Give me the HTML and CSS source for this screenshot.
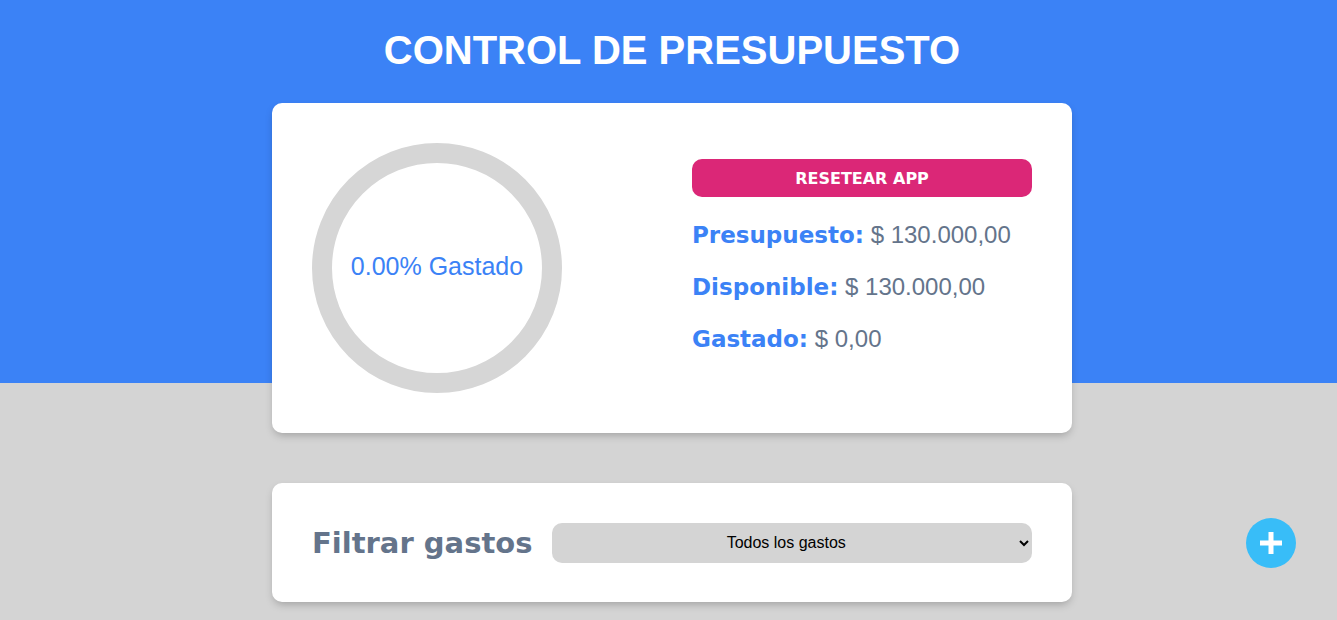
FILE: index.html
```html
<!DOCTYPE html>
<html lang="es">
<head>
<meta charset="utf-8">
<title>Control de presupuesto</title>
<link rel="stylesheet" href="styles.css">
</head>
<body>
<header class="header">
  <h1 class="title">CONTROL DE PRESUPUESTO</h1>
  <div class="card budget">
    <div class="progress">
      <span class="progress-text">0.00% Gastado</span>
    </div>
    <div class="summary">
      <button class="reset">RESETEAR APP</button>
      <p class="line"><span class="label">Presupuesto:</span> $ 130.000,00</p>
      <p class="line"><span class="label">Disponible:</span> $ 130.000,00</p>
      <p class="line"><span class="label">Gastado:</span> $ 0,00</p>
    </div>
  </div>
</header>
<main class="main">
  <div class="card filter">
    <label class="filter-label" for="filtro">Filtrar gastos</label>
    <select id="filtro" class="filter-select">
      <option>Todos los gastos</option>
    </select>
  </div>
</main>
<button class="add" aria-label="Nuevo gasto">
  <svg width="26" height="26" viewBox="0 0 26 26"><path d="M13 2v22M2 13h22" stroke="#fff" stroke-width="5" fill="none"/></svg>
</button>
</body>
</html>
```

FILE: styles.css
```css
* { box-sizing: border-box; }
body {
  margin: 0;
  padding-left: 7px;
  font-family: "Liberation Sans", Arial, sans-serif;
  background: linear-gradient(to bottom, #3b82f6 0, #3b82f6 383px, #d4d4d4 383px);
  min-height: 100vh;
}
.header { padding-top: 27px; }
.title {
  margin: 0 0 30px;
  text-align: center;
  color: #fff;
  font-size: 40px;
  line-height: 46px;
  font-weight: 700;
}
.card {
  width: 800px;
  margin: 0 auto;
  background: #fff;
  border-radius: 10px;
  box-shadow: 0 4px 8px -2px rgba(0,0,0,0.25);
  padding: 40px;
}
.budget {
  display: grid;
  grid-template-columns: 1fr 1fr;
  column-gap: 40px;
  align-items: center;
}
.progress {
  width: 250px;
  height: 250px;
  border-radius: 50%;
  border: 20px solid #d6d6d6;
  display: flex;
  align-items: center;
  justify-content: center;
  padding-bottom: 4px;
}
.progress-text {
  color: #3b82f6;
  font-size: 25px;
}
.summary { display: block; }
.reset {
  display: block;
  width: 100%;
  height: 38px;
  border: none;
  border-radius: 10px;
  background: #db2777;
  color: #fff;
  font-family: "DejaVu Sans", "Liberation Sans", sans-serif;
  font-weight: 700;
  font-size: 16px;
}
.line {
  margin: 24px 0;
  font-size: 24px;
  line-height: 27px;
  color: #64748b;
}
.label {
  font-family: "DejaVu Sans", "Liberation Sans", sans-serif;
  color: #3b82f6;
  font-weight: 700;
  font-size: 23px;
}
.main { padding-top: 50px; }
.filter {
  display: flex;
  align-items: center;
  gap: 20px;
  padding: 40px 40px 39px;
}
.filter-label {
  flex: 0 0 220px;
  font-family: "DejaVu Sans", "Liberation Sans", sans-serif;
  font-size: 29px;
  font-weight: 700;
  color: #64748b;
  white-space: nowrap;
}
.filter-select {
  flex: 1;
  height: 40px;
  border: none;
  border-radius: 10px;
  background: #d4d4d4;
  text-align: center;
  font-family: "Liberation Sans", Arial, sans-serif;
  font-size: 16px;
  color: #000;
  padding: 0 8px 2px;
}
.add {
  position: fixed;
  right: 41px;
  bottom: 52px;
  width: 50px;
  height: 50px;
  border-radius: 50%;
  border: none;
  background: #38bdf8;
  display: flex;
  align-items: center;
  justify-content: center;
  padding: 0;
}
```
